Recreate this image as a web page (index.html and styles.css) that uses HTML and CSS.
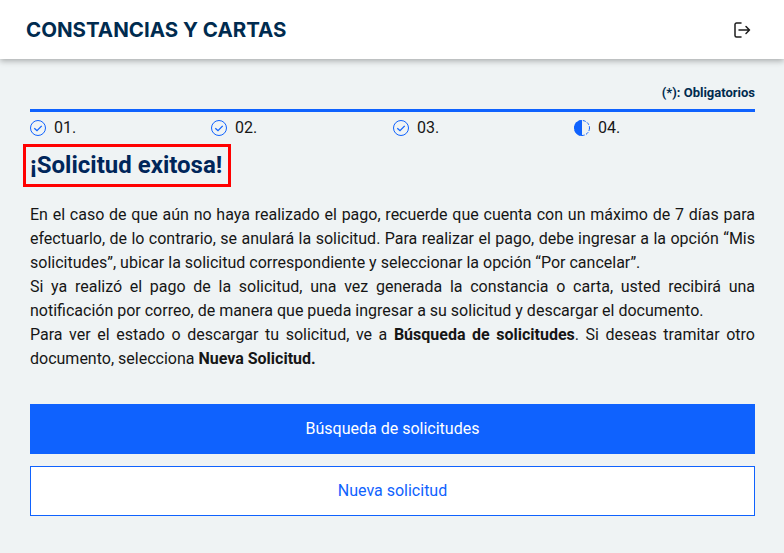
FILE: index.html
```html
<!DOCTYPE html>
<html>
<head>
    <title>Constancias y cartas</title>
    <link rel="stylesheet" href="styles.css">
</head>
<body>
    <header class="topbar">
        <h1 class="topbar-title">CONSTANCIAS Y CARTAS</h1>
        <svg class="logout" width="18" height="18" viewBox="0 0 18 18" fill="none" stroke="#1c1c1c" stroke-width="1.5" stroke-linecap="round" stroke-linejoin="round">
            <path d="M8 2H3.500C2.700 2 2 2.700 2 3.500v11c0 .8.7 1.500 1.500 1.500H8"/>
            <path d="M6 9h10.500M13 5.500 16.500 9 13 12.500"/>
        </svg>
    </header>

    <main class="content">
        <p class="required">(*): Obligatorios</p>

        <div class="steps">
            <div class="step">
                <svg class="step-icon" width="16" height="16" viewBox="0 0 16 16" fill="none" stroke="#0f62fe">
                    <circle cx="8" cy="8" r="7.500"/>
                    <path d="M4.300 8.200 7 10.700 11.700 5.900" stroke-width="1.300"/>
                </svg>
                <span>01.</span>
            </div>
            <div class="step">
                <svg class="step-icon" width="16" height="16" viewBox="0 0 16 16" fill="none" stroke="#0f62fe">
                    <circle cx="8" cy="8" r="7.500"/>
                    <path d="M4.300 8.200 7 10.700 11.700 5.900" stroke-width="1.300"/>
                </svg>
                <span>02.</span>
            </div>
            <div class="step">
                <svg class="step-icon" width="16" height="16" viewBox="0 0 16 16" fill="none" stroke="#0f62fe">
                    <circle cx="8" cy="8" r="7.500"/>
                    <path d="M4.300 8.200 7 10.700 11.700 5.900" stroke-width="1.300"/>
                </svg>
                <span>03.</span>
            </div>
            <div class="step">
                <svg class="step-icon" width="16" height="16" viewBox="0 0 16 16" fill="none" stroke="#0f62fe">
                    <circle cx="8" cy="8" r="7.500" stroke-dasharray="3 1.500"/>
                    <path d="M8 0a8 8 0 0 0 0 16z" fill="#0f62fe" stroke="none"/>
                </svg>
                <span>04.</span>
            </div>
        </div>

        <h2 class="success">¡Solicitud exitosa!</h2>

        <div class="message">
            <p>En el caso de que aún no haya realizado el pago, recuerde que cuenta con un máximo de 7 días para efectuarlo, de lo contrario, se anulará la solicitud. Para realizar el pago, debe ingresar a la opción “Mis solicitudes”, ubicar la solicitud correspondiente y seleccionar la opción “Por cancelar”.</p>
            <p>Si ya realizó el pago de la solicitud, una vez generada la constancia o carta, usted recibirá una notificación por correo, de manera que pueda ingresar a su solicitud y descargar el documento.</p>
            <p>Para ver el estado o descargar tu solicitud, ve a <b>Búsqueda de solicitudes</b>. Si deseas tramitar otro documento, selecciona <b>Nueva Solicitud.</b></p>
        </div>

        <div class="actions">
            <button type="button" class="btn btn-primary">Búsqueda de solicitudes</button>
            <button type="button" class="btn btn-outline">Nueva solicitud</button>
        </div>
    </main>
</body>
</html>
```

FILE: styles.css
```css
body {
    margin: 0;
    background-color: #eff3f4;
    font-family: Roboto, "Liberation Sans", sans-serif;
    color: #161616;
}

.topbar {
    height: 59px;
    padding: 0 33px 0 26px;
    display: flex;
    align-items: center;
    justify-content: space-between;
    background-color: #fff;
    box-shadow: 0 2px 6px rgba(0, 0, 0, 0.3);
}

.topbar-title {
    margin: 0;
    font-family: Inter, sans-serif;
    font-size: 20.500px;
    font-weight: 700;
    color: #002b4f;
}

.content {
    padding: 26px 29px 0 30px;
}

.required {
    margin: 0;
    text-align: right;
    font-size: 13px;
    font-weight: 700;
    line-height: 15px;
    color: #002b4f;
}

.steps {
    margin-top: 9px;
    border-top: 3px solid #0f62fe;
    padding-top: 7px;
    display: grid;
    grid-template-columns: 181px 182px 181px 1fr;
}

.step {
    display: flex;
    align-items: center;
    gap: 8px;
    font-size: 16px;
    line-height: 18px;
}

.success {
    display: inline-block;
    margin: 7px 0 0 -7px;
    padding: 0 6px 0 4px;
    border: 3px solid #ff0000;
    font-size: 24px;
    font-weight: 700;
    line-height: 37px;
    color: #00265a;
}

.message {
    margin-top: 16px;
    font-size: 16px;
    line-height: 24px;
    text-align: justify;
}

.message p {
    margin: 0;
}

.actions {
    margin-top: 33px;
    display: flex;
    flex-direction: column;
    gap: 12px;
}

.btn {
    height: 50px;
    padding: 0 0 2px;
    font-family: Roboto, sans-serif;
    font-size: 16px;
    cursor: pointer;
}

.btn-primary {
    background-color: #0f62fe;
    color: #fff;
    border: none;
}

.btn-outline {
    background-color: #fff;
    color: #0f62fe;
    border: 1px solid #0f62fe;
}
```
